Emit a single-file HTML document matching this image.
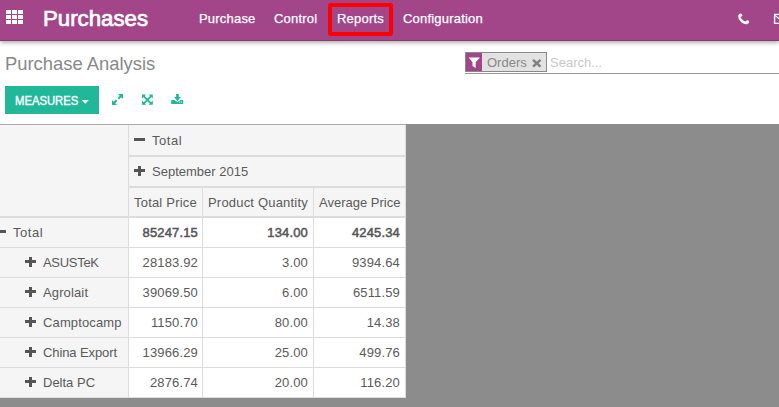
<!DOCTYPE html>
<html><head><meta charset="utf-8">
<style>
*{margin:0;padding:0;box-sizing:border-box}
html,body{width:779px;height:407px;overflow:hidden;background:#fff;font-family:"Liberation Sans",sans-serif;color:#4c4c4c;position:relative}
.a{position:absolute}
.t{position:absolute;font-size:13px;line-height:15px;white-space:nowrap;color:#5a5a5a}
.b{-webkit-text-stroke:0.5px #555;color:#555}
#nav{position:absolute;left:0;top:0;width:779px;height:41px;background:#a24689;border-bottom:1px solid #86386f;box-shadow:0 2px 4px rgba(0,0,0,.3);z-index:5}
.grid{position:absolute;left:6px;top:10px;width:18px;height:14px}
.grid i{position:absolute;width:5px;height:4px;background:#fff}
.brand{position:absolute;left:43px;top:6px;font-size:21.6px;line-height:26px;color:#fff;white-space:nowrap;-webkit-text-stroke:0.7px #fff;transform:scaleX(1.03);transform-origin:0 0}
.menu{position:absolute;top:11px;font-size:13px;color:#fff;white-space:nowrap;-webkit-text-stroke:0.25px #fff;letter-spacing:0.2px}
.redbox{position:absolute;left:328px;top:3px;width:65px;height:33px;border:4px solid #ff0000;border-radius:3px}
.title{position:absolute;left:5px;top:53px;font-size:18.4px;color:#888;white-space:nowrap}
.btn{position:absolute;left:5px;top:86px;width:94px;height:28px;background:#21b799}
.btnt{position:absolute;left:15px;top:93px;font-size:13.6px;line-height:15px;color:#fff;white-space:nowrap;transform:scaleX(0.83);transform-origin:0 0;-webkit-text-stroke:0.4px #fff}
.facet{position:absolute;left:465px;top:52px;width:82px;height:20px;border:1px solid #8a8a8a;background:#e2e2e2}
.fpur{position:absolute;left:0;top:0;width:16px;height:18px;background:#a24689}
.caret{position:absolute;left:82px;top:100px;width:0;height:0;border-left:3.5px solid transparent;border-right:3.5px solid transparent;border-top:4px solid #fff}
</style></head><body>
<div id="nav">
  <div class="grid">
    <i style="left:0;top:0"></i><i style="left:6px;top:0"></i><i style="left:12px;top:0"></i>
    <i style="left:0;top:5px"></i><i style="left:6px;top:5px"></i><i style="left:12px;top:5px"></i>
    <i style="left:0;top:10px"></i><i style="left:6px;top:10px"></i><i style="left:12px;top:10px"></i>
  </div>
  <div class="brand">Purchases</div>
  <div class="menu" style="left:199px">Purchase</div>
  <div class="menu" style="left:274px">Control</div>
  <div class="menu" style="left:337px">Reports</div>
  <div class="menu" style="left:403px">Configuration</div>
  <div class="redbox"></div>
</div>
<div class="title">Purchase Analysis</div>
<div class="btn"></div>
<div class="btnt">MEASURES</div>
<svg class="a" style="left:80px;top:98px" width="12" height="8" viewBox="0 0 12 8"><path d="M1.7,2 L8.9,2 L5.3,5.7 Z" fill="#fff"/></svg>
<div class="facet"><div class="fpur"></div></div>
<svg class="a" style="left:465px;top:52px" width="20" height="20" viewBox="0 0 20 20"><path d="M3.7,5.6 L14.9,5.6 L10.7,10.2 L10.7,16 L7.5,13.9 L7.5,10.2 Z" fill="#fff"/></svg>
<div class="t" style="left:487px;top:55px;color:#888">Orders</div>
<svg class="a" style="left:530px;top:57px" width="13" height="12" viewBox="0 0 13 12"><path d="M3,2.8 L10.5,9.7 M10.5,2.8 L3,9.7" stroke="#808080" stroke-width="2.5" stroke-linecap="butt"/></svg>
<div class="t" style="left:550px;top:55px;color:#c8c8c8">Search...</div>
<div class="a" style="left:465px;top:73px;width:314px;height:1px;background:#999"></div>
<svg class="a" style="left:108px;top:90px" width="80" height="20" viewBox="0 0 80 20">
 <g fill="#21b799">
  <path d="M10,4 L15,4 L15,9 Z"/><path d="M4,10 L4,15 L9,15 Z"/>
  <path d="M34,4.4 L38.2,4.4 L34,8.6 Z"/><path d="M44.8,4.4 L40.6,4.4 L44.8,8.6 Z"/>
  <path d="M34,14.8 L38.2,14.8 L34,10.6 Z"/><path d="M44.8,14.8 L40.6,14.8 L44.8,10.6 Z"/>
  <path d="M68.1,4 L70.8,4 L70.8,7 L72.9,7 L69.45,10.9 L66,7 L68.1,7 Z"/>
  <path d="M63.2,10.1 L66.2,10.1 L69.45,12.1 L72.7,10.1 L75.2,10.1 L75.2,14 L63.2,14 Z"/>
 </g>
 <g stroke="#21b799" stroke-width="2.1">
  <path d="M13.2,5.8 L10.3,8.7 M5.8,13.2 L8.7,10.3"/>
 </g>
 <g stroke="#21b799" stroke-width="1.8">
  <path d="M35.4,5.8 L43.4,13.8 M43.4,5.8 L35.4,13.8"/>
 </g>
 <circle cx="71.8" cy="12.1" r="0.55" fill="#fff"/><circle cx="73.4" cy="12.1" r="0.55" fill="#fff"/>
</svg>
<svg class="a" style="left:736px;top:11px;z-index:6" width="16" height="16" viewBox="0 0 16 16">
 <path d="M4.3,3.6 C1.8,5.8 5.6,12.4 11.3,12" stroke="#fff" stroke-width="2.3" fill="none"/>
 <circle cx="4.5" cy="4.3" r="1.75" fill="#fff"/><circle cx="11.4" cy="11.1" r="1.75" fill="#fff"/>
</svg>
<svg class="a" style="left:773px;top:13px;z-index:6" width="6" height="12" viewBox="0 0 6 12">
 <path d="M1.6,1.4 L8,1.4 M1.6,0.8 L1.6,10.4 L8,10.4" stroke="#fff" stroke-width="1.4" fill="none"/>
 <path d="M1.8,2 L6,5.8" stroke="#fff" stroke-width="1.2" fill="none"/>
</svg>
<div class="a" style="left:0px;top:124px;width:779px;height:283px;background:#8c8c8c;"></div>
<div class="a" style="left:0px;top:124px;width:406px;height:94px;background:#f5f5f5;"></div>
<div class="a" style="left:0px;top:218px;width:128px;height:180px;background:#f5f5f5;"></div>
<div class="a" style="left:129px;top:218px;width:276px;height:179px;background:#fff;"></div>
<div class="a" style="left:0px;top:124px;width:406px;height:1px;background:#a9a9a9;"></div>
<div class="a" style="left:128px;top:155px;width:278px;height:2px;background:#dcdcdc;"></div>
<div class="a" style="left:128px;top:186px;width:278px;height:2px;background:#dcdcdc;"></div>
<div class="a" style="left:0px;top:216px;width:406px;height:2px;background:#dcdcdc;"></div>
<div class="a" style="left:0px;top:247px;width:406px;height:1px;background:#dcdcdc;"></div>
<div class="a" style="left:0px;top:277px;width:406px;height:1px;background:#dcdcdc;"></div>
<div class="a" style="left:0px;top:307px;width:406px;height:1px;background:#dcdcdc;"></div>
<div class="a" style="left:0px;top:337px;width:406px;height:1px;background:#dcdcdc;"></div>
<div class="a" style="left:0px;top:367px;width:406px;height:1px;background:#dcdcdc;"></div>
<div class="a" style="left:0px;top:397px;width:406px;height:1px;background:#dcdcdc;"></div>
<div class="a" style="left:128px;top:125px;width:1px;height:273px;background:#dcdcdc;"></div>
<div class="a" style="left:202px;top:188px;width:1px;height:210px;background:#dcdcdc;"></div>
<div class="a" style="left:313px;top:188px;width:1px;height:210px;background:#dcdcdc;"></div>
<div class="a" style="left:405px;top:125px;width:1px;height:273px;background:#dcdcdc;"></div>
<div class="a" style="left:134px;top:138px;width:11px;height:3px;background:#555;"></div>
<div class="t" style="left:152px;top:133px;letter-spacing:0.55px">Total</div>
<div class="a" style="left:134px;top:169px;width:11px;height:3px;background:#555;"></div>
<div class="a" style="left:138px;top:166px;width:3px;height:10px;background:#555;"></div>
<div class="t" style="left:152px;top:164px;">September 2015</div>
<div class="t" style="left:134px;top:195px;letter-spacing:0.2px">Total Price</div>
<div class="t" style="left:208px;top:195px;letter-spacing:0.19px">Product Quantity</div>
<div class="t" style="left:319px;top:195px;">Average Price</div>
<div class="a" style="left:-5px;top:230px;width:11px;height:3px;background:#555;"></div>
<div class="t" style="left:13px;top:225px;letter-spacing:0.55px">Total</div>
<div class="t b" style="right:581px;top:225px;letter-spacing:0.15px">85247.15</div>
<div class="t b" style="right:471px;top:225px;letter-spacing:0.15px">134.00</div>
<div class="t b" style="right:379px;top:225px;letter-spacing:0.15px">4245.34</div>
<div class="a" style="left:25px;top:260px;width:11px;height:3px;background:#555;"></div>
<div class="a" style="left:29px;top:257px;width:3px;height:10px;background:#555;"></div>
<div class="t" style="left:43px;top:255px;letter-spacing:-0.3px">ASUSTeK</div>
<div class="t" style="right:581px;top:255px;letter-spacing:0.15px">28183.92</div>
<div class="t" style="right:471px;top:255px;letter-spacing:0.15px">3.00</div>
<div class="t" style="right:379px;top:255px;letter-spacing:0.15px">9394.64</div>
<div class="a" style="left:25px;top:290px;width:11px;height:3px;background:#555;"></div>
<div class="a" style="left:29px;top:287px;width:3px;height:10px;background:#555;"></div>
<div class="t" style="left:43px;top:285px;letter-spacing:0.13px">Agrolait</div>
<div class="t" style="right:581px;top:285px;letter-spacing:0.15px">39069.50</div>
<div class="t" style="right:471px;top:285px;letter-spacing:0.15px">6.00</div>
<div class="t" style="right:379px;top:285px;letter-spacing:0.15px">6511.59</div>
<div class="a" style="left:25px;top:320px;width:11px;height:3px;background:#555;"></div>
<div class="a" style="left:29px;top:317px;width:3px;height:10px;background:#555;"></div>
<div class="t" style="left:43px;top:315px;letter-spacing:0.14px">Camptocamp</div>
<div class="t" style="right:581px;top:315px;letter-spacing:0.15px">1150.70</div>
<div class="t" style="right:471px;top:315px;letter-spacing:0.15px">80.00</div>
<div class="t" style="right:379px;top:315px;letter-spacing:0.15px">14.38</div>
<div class="a" style="left:25px;top:350px;width:11px;height:3px;background:#555;"></div>
<div class="a" style="left:29px;top:347px;width:3px;height:10px;background:#555;"></div>
<div class="t" style="left:43px;top:345px;letter-spacing:-0.1px">China Export</div>
<div class="t" style="right:581px;top:345px;letter-spacing:0.15px">13966.29</div>
<div class="t" style="right:471px;top:345px;letter-spacing:0.15px">25.00</div>
<div class="t" style="right:379px;top:345px;letter-spacing:0.15px">499.76</div>
<div class="a" style="left:25px;top:380px;width:11px;height:3px;background:#555;"></div>
<div class="a" style="left:29px;top:377px;width:3px;height:10px;background:#555;"></div>
<div class="t" style="left:43px;top:375px;letter-spacing:0px">Delta PC</div>
<div class="t" style="right:581px;top:375px;letter-spacing:0.15px">2876.74</div>
<div class="t" style="right:471px;top:375px;letter-spacing:0.15px">20.00</div>
<div class="t" style="right:379px;top:375px;letter-spacing:0.15px">116.20</div>
</body></html>
